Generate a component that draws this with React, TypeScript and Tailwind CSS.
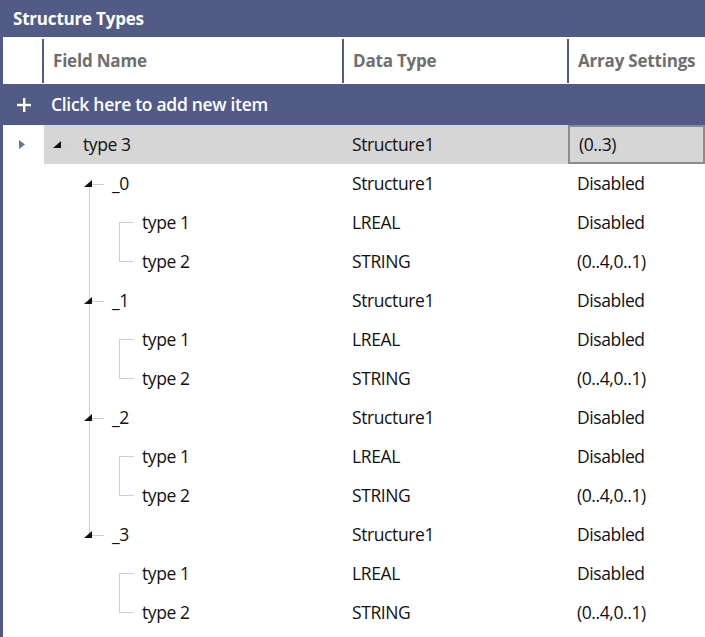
import React from 'react';

type Row = {
  name: string;
  level: 0 | 1 | 2;
  dataType: string;
  array: string;
  // tree connector flags
  last?: boolean; // last child at its level (level 1: _3)
  first?: boolean; // first child at its level
  parentLast?: boolean; // level 2 row under last level-1 node
};

const rows: Row[] = [
  { name: 'type 3', level: 0, dataType: 'Structure1', array: '(0..3)' },
];
['_0', '_1', '_2', '_3'].forEach((n, i) => {
  const isLast = i === 3;
  rows.push({ name: n, level: 1, dataType: 'Structure1', array: 'Disabled', last: isLast, first: i === 0 });
  rows.push({ name: 'type 1', level: 2, dataType: 'LREAL', array: 'Disabled', first: true, parentLast: isLast });
  rows.push({ name: 'type 2', level: 2, dataType: 'STRING', array: '(0..4,0..1)', parentLast: isLast });
});

const LINE = '#cfcfcf';

const Glyph = ({ x }: { x: number }) => (
  <path d={`M${x} 23 L${x + 8} 23 L${x + 8} 16 Z`} fill="#111" />
);

const Connectors = ({ row }: { row: Row }) => {
  return (
    <svg width="100" height="39" className="shrink-0">
      {row.level === 0 && (
        <>
          <line x1="17" y1="20.5" x2="31" y2="20.5" stroke={LINE} />
          <Glyph x={9} />
        </>
      )}
      {row.level === 1 && (
        <>
          <line x1="45.5" y1={row.first ? 23 : 0} x2="45.5" y2={row.last ? 20 : 39} stroke={LINE} />
          <line x1="48" y1="20.5" x2="60" y2="20.5" stroke={LINE} />
          <Glyph x={40} />
        </>
      )}
      {row.level === 2 && (
        <>
          {!row.parentLast && <line x1="45.5" y1="0" x2="45.5" y2="39" stroke={LINE} />}
          <line x1="75.5" y1={row.first ? 19 : 0} x2="75.5" y2={row.first ? 39 : 19.5} stroke={LINE} />
          <line x1="75" y1="19.5" x2="90" y2="19.5" stroke={LINE} />
        </>
      )}
    </svg>
  );
};

const textStart = { 0: 'w-[39px]', 1: 'w-[68px]', 2: 'w-[98px]' } as const;

export default function App() {
  return (
    <div
      className="w-[705px] h-[637px] overflow-hidden bg-white border-l-[3px] border-[#525b85] text-[17.5px] text-[#111]"
      style={{ fontFamily: '"Open Sans", "Noto Sans", sans-serif' }}
    >
      <div className="h-[37px] bg-[#525b85] flex items-center pl-[10px] text-white font-bold text-[17px] tracking-[-0.2px]">
        Structure Types
      </div>

      {/* column header */}
      <div className="h-[47px] flex bg-white text-[#6f6f6f] font-bold text-[17px] tracking-[-0.2px]">
        <div className="w-[39px]" />
        <div className="w-[2px] bg-[#525b85] mt-[2px] mb-[1px]" />
        <div className="w-[298px] pl-[9px] flex items-center">Field Name</div>
        <div className="w-[2px] bg-[#525b85] mt-[2px] mb-[1px]" />
        <div className="w-[223px] pl-[9px] flex items-center">Data Type</div>
        <div className="w-[2px] bg-[#525b85] mt-[2px] mb-[1px]" />
        <div className="flex-1 pl-[9px] flex items-center whitespace-nowrap">Array Settings</div>
      </div>

      {/* add row */}
      <div className="h-[41px] bg-[#525b85] flex items-center text-white font-semibold text-[17.5px]">
        <div className="w-[41px] flex items-center justify-center pl-[1px]">
          <svg width="14" height="14" viewBox="0 0 14 14">
            <rect x="6" y="0" width="2.4" height="14" fill="#fff" />
            <rect x="0" y="5.8" width="14" height="2.4" fill="#fff" />
          </svg>
        </div>
        <span className="pl-[7px] tracking-[-0.3px]">Click here to add new item</span>
      </div>

      {rows.map((row, i) => {
        const selected = i === 0;
        return (
          <div key={i} className="h-[39px] flex">
            <div className="w-[41px] flex items-center justify-center pr-[4px]">
              {selected && (
                <svg width="6" height="9" viewBox="0 0 6 9">
                  <path d="M0 0 L6 4.5 L0 9 Z" fill="#6a7296" />
                </svg>
              )}
            </div>
            <div className={`flex-1 flex ${selected ? 'bg-[#d6d6d6]' : ''}`}>
              <div className="w-[298px] flex items-center">
                <div className={`${textStart[row.level]} shrink-0 h-full overflow-hidden`}>
                  <Connectors row={row} />
                </div>
                <span className="tracking-[-0.4px]">{row.name}</span>
              </div>
              <div className="w-[226px] pl-[10px] flex items-center tracking-[-0.4px]">{row.dataType}</div>
              <div
                className={`flex-1 pl-[9px] flex items-center tracking-[-0.4px] ${
                  selected ? 'border-2 border-[#8c8c8c] pl-[7px]' : ''
                }`}
              >
                {row.array}
              </div>
            </div>
          </div>
        );
      })}
    </div>
  );
}
